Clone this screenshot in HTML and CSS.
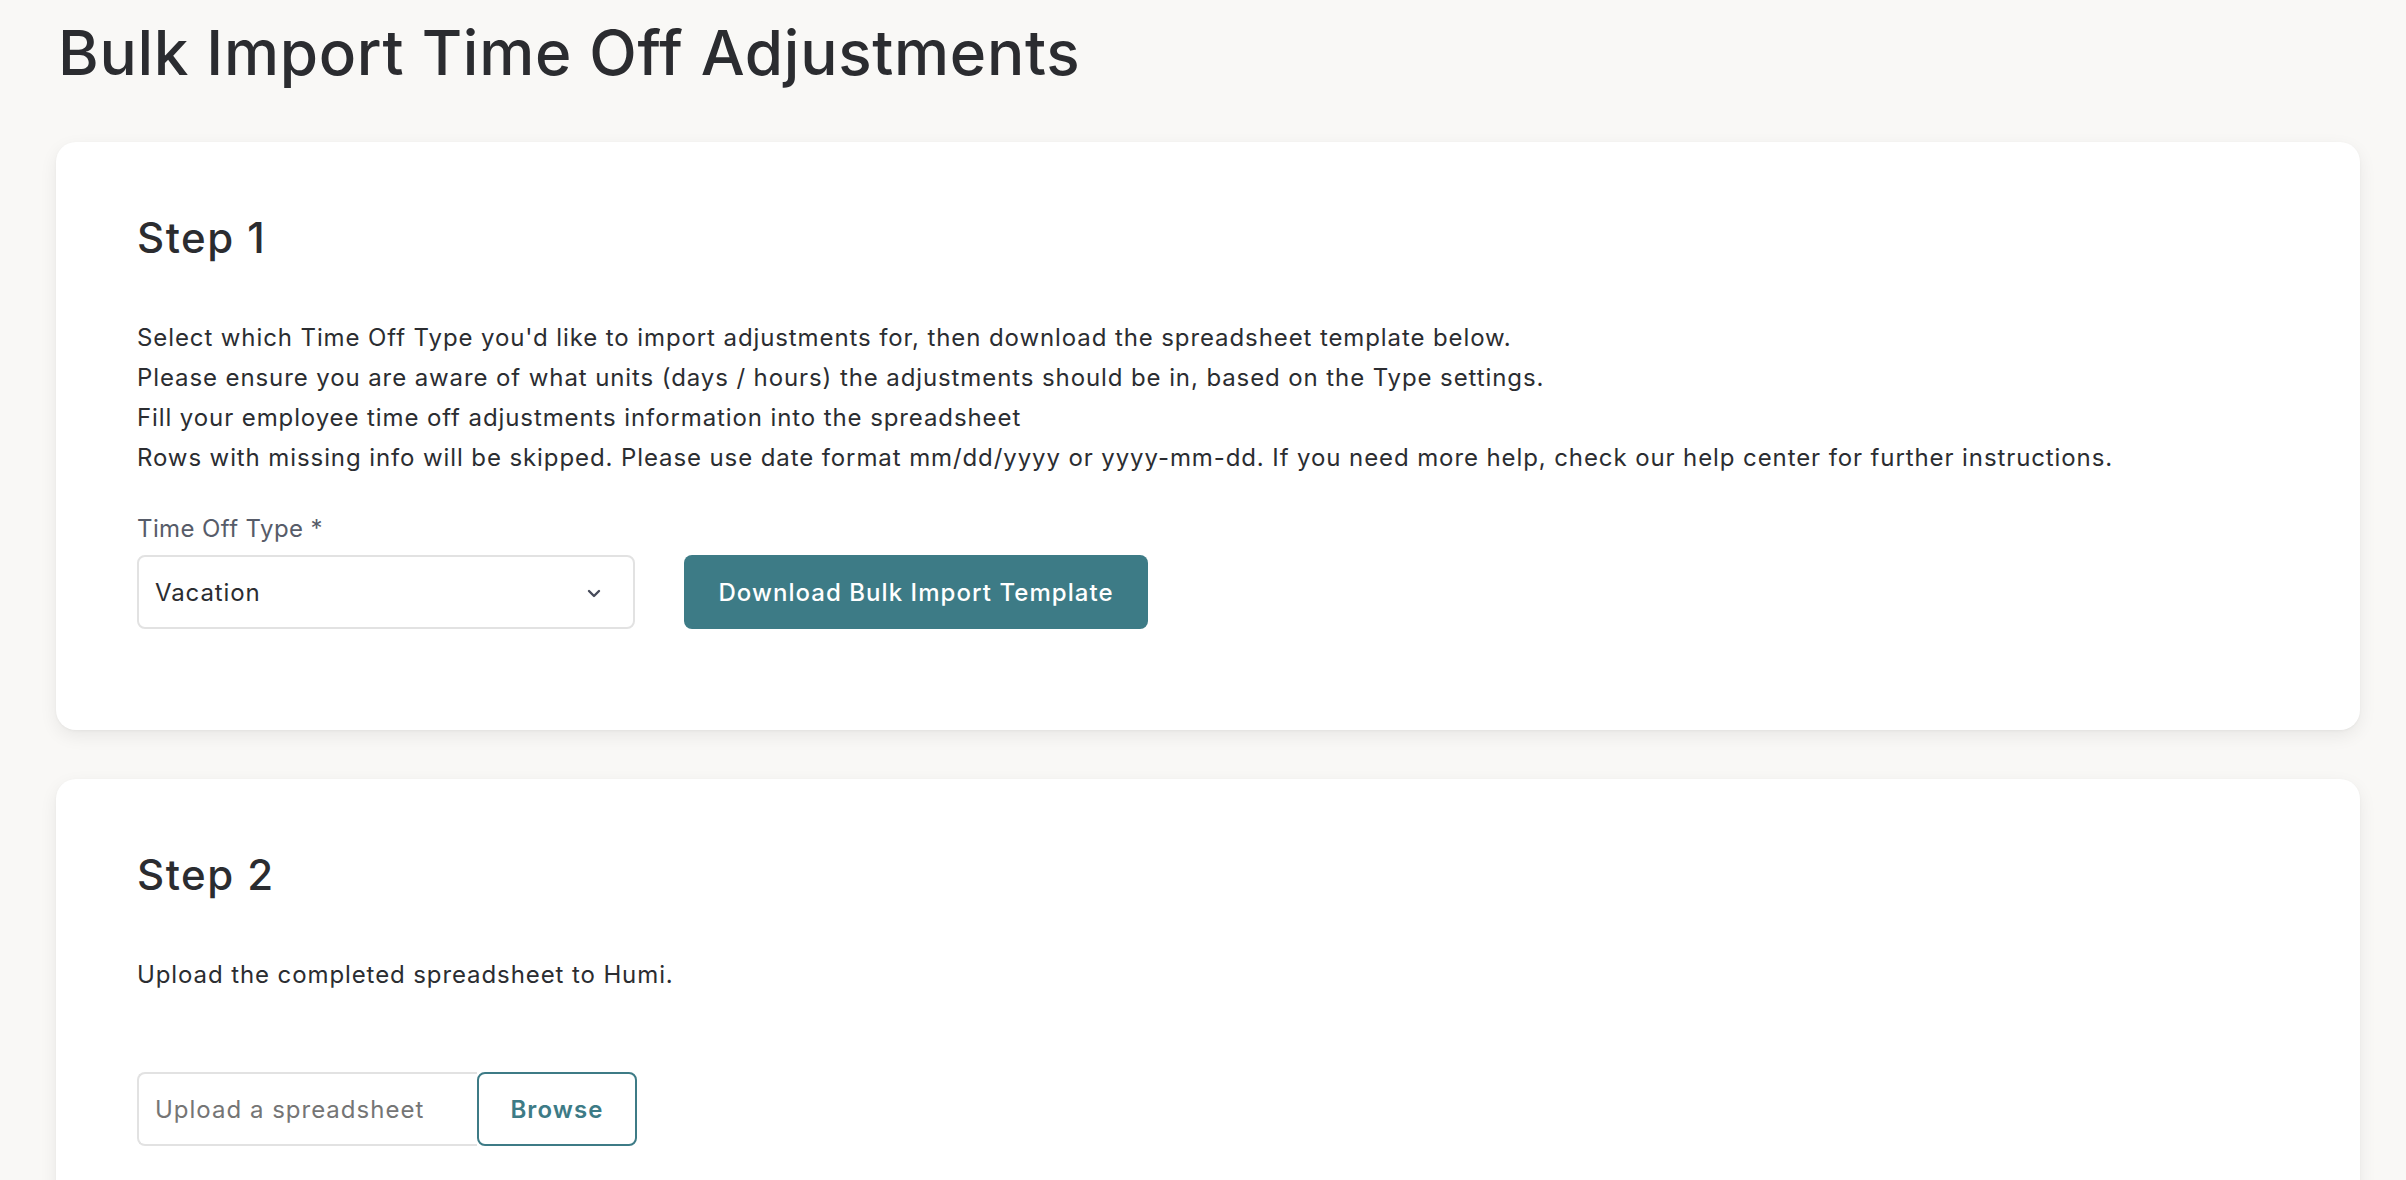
FILE: index.html
```html
<!DOCTYPE html>
<html lang="en">
<head>
<meta charset="utf-8">
<title>Bulk Import Time Off Adjustments</title>
<link rel="stylesheet" href="styles.css">
</head>
<body>
<main class="page">
  <h1 class="page-title">Bulk Import Time Off Adjustments</h1>

  <section class="card">
    <h2 class="step-title">Step 1</h2>
    <div class="step-text">
      <p>Select which Time Off Type you'd like to import adjustments for, then download the spreadsheet template below.</p>
      <p>Please ensure you are aware of what units (days / hours) the adjustments should be in, based on the Type settings.</p>
      <p>Fill your employee time off adjustments information into the spreadsheet</p>
      <p>Rows with missing info will be skipped. Please use date format mm/dd/yyyy or yyyy-mm-dd. If you need more help, check our help center for further instructions.</p>
    </div>
    <div class="form-row">
      <div class="field">
        <label class="field-label">Time Off Type *</label>
        <div class="select">
          <span class="select-value">Vacation</span>
          <svg class="chevron" width="14" height="9" viewBox="0 0 14 9"><path d="M2 2l5 5 5-5" fill="none" stroke="#474b5a" stroke-width="2.4" stroke-linecap="round" stroke-linejoin="round"/></svg>
        </div>
      </div>
      <button class="btn-primary">Download Bulk Import Template</button>
    </div>
  </section>

  <section class="card">
    <h2 class="step-title">Step 2</h2>
    <div class="step-text">
      <p>Upload the completed spreadsheet to Humi.</p>
    </div>
    <div class="upload">
      <div class="upload-input">Upload a spreadsheet</div>
      <button class="btn-outline">Browse</button>
    </div>
  </section>
</main>
</body>
</html>
```

FILE: styles.css
```css
* { box-sizing: border-box; }
html, body { margin: 0; padding: 0; }
body {
  background: #f9f8f6;
  font-family: Inter, "Noto Sans", "Liberation Sans", sans-serif;
  color: #2b2d31;
  overflow: hidden;
}
.page {
  padding: 0 46px 0 56px;
}
.page-title {
  margin: 0;
  padding: 10px 0 0 2px;
  font-size: 62px;
  line-height: 86px;
  font-weight: 500;
  letter-spacing: 0.7px;
  color: #2b2c30;
}
.card {
  background: #fff;
  border-radius: 20px;
  box-shadow: 0 6px 18px rgba(0,0,0,0.07), 0 1px 3px rgba(0,0,0,0.04);
  padding: 70px 81px 101px;
  margin-top: 46px;
}
.card + .card { margin-top: 49px; }
.step-title {
  margin: 0;
  font-size: 42px;
  line-height: 52px;
  font-weight: 500;
  letter-spacing: 1.5px;
  color: #2b2c30;
}
.step-text {
  margin-top: 54px;
  font-size: 24px;
  line-height: 40px;
  letter-spacing: 0.9px;
}
.step-text p { margin: 0; }
.form-row {
  margin-top: 36px;
  display: flex;
  align-items: flex-end;
  gap: 49px;
}
.field { display: flex; flex-direction: column; gap: 11px; }
.field-label {
  font-size: 24px;
  line-height: 30px;
  letter-spacing: 0.4px;
  color: #575c69;
}
.select {
  width: 498px;
  height: 74px;
  border: 2px solid #e2e2e2;
  border-radius: 8px;
  display: flex;
  align-items: center;
  justify-content: space-between;
  padding: 0 32px 0 16px;
  font-size: 24px;
  letter-spacing: 0.9px;
}
.chevron { margin-top: 2px; }
.btn-primary {
  height: 74px;
  width: 464px;
  background: #3d7b86;
  color: #fff;
  border: none;
  border-radius: 8px;
  font-family: inherit;
  font-size: 24px;
  font-weight: 500;
  letter-spacing: 1.05px;
}
.upload {
  margin-top: 77px;
  display: flex;
}
.upload-input {
  width: 340px;
  height: 74px;
  border: 2px solid #e2e2e2;
  border-right: none;
  border-radius: 8px 0 0 8px;
  display: flex;
  align-items: center;
  padding-left: 16px;
  font-size: 24px;
  letter-spacing: 1px;
  color: #757575;
}
.btn-outline {
  width: 160px;
  height: 74px;
  background: #fff;
  border: 2px solid #3d7b86;
  border-radius: 8px;
  color: #3d7b86;
  font-family: inherit;
  font-size: 24px;
  font-weight: 600;
  letter-spacing: 1.1px;
}
```
